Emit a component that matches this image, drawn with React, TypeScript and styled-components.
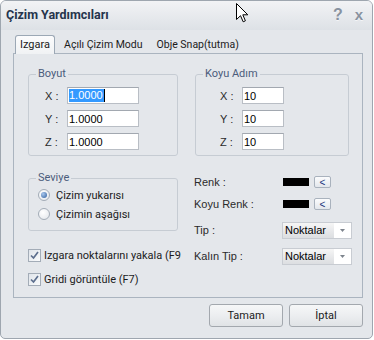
import styled, { createGlobalStyle } from 'styled-components';

const GlobalStyle = createGlobalStyle`
  html, body {
    margin: 0;
    padding: 0;
    background: #ffffff;
  }
  * {
    box-sizing: border-box;
  }
`;

const uiFont = `Roboto, "Liberation Sans", sans-serif`;
const classicFont = `"Liberation Sans", Arial, sans-serif`;

const App = () => {
  return (
    <>
      <GlobalStyle />
      <Window>
        <TitleBar>
          <Title>Çizim Yardımcıları</Title>
          <TitleButton>?</TitleButton>
          <TitleButton $close>x</TitleButton>
        </TitleBar>
        <Content>
          <TabStrip>
            <Tab $active>Izgara</Tab>
            <Tab>Açılı Çizim Modu</Tab>
            <Tab>Obje Snap(tutma)</Tab>
          </TabStrip>
          <Panel>
            <TopRow>
              <Group $width={150}>
                <Legend>Boyut</Legend>
                <GroupBody $padLeft={16}>
                  <FieldRow>
                    <AxisLabel>X :</AxisLabel>
                    <TextBox $width={72}>
                      <Selected>1.0000</Selected>
                      <Caret />
                    </TextBox>
                  </FieldRow>
                  <FieldRow>
                    <AxisLabel>Y :</AxisLabel>
                    <TextBox $width={72}>1.0000</TextBox>
                  </FieldRow>
                  <FieldRow>
                    <AxisLabel>Z :</AxisLabel>
                    <TextBox $width={72}>1.0000</TextBox>
                  </FieldRow>
                </GroupBody>
              </Group>
              <Group $width={154}>
                <Legend>Koyu Adım</Legend>
                <GroupBody $padLeft={24}>
                  <FieldRow>
                    <AxisLabel>X :</AxisLabel>
                    <TextBox $width={42}>10</TextBox>
                  </FieldRow>
                  <FieldRow>
                    <AxisLabel>Y :</AxisLabel>
                    <TextBox $width={42}>10</TextBox>
                  </FieldRow>
                  <FieldRow>
                    <AxisLabel>Z :</AxisLabel>
                    <TextBox $width={42}>10</TextBox>
                  </FieldRow>
                </GroupBody>
              </Group>
            </TopRow>

            <BottomRow>
              <LeftColumn>
                <Group $width={150}>
                  <Legend>Seviye</Legend>
                  <RadioList>
                    <OptionRow>
                      <Radio $checked />
                      <OptionText>Çizim yukarısı</OptionText>
                    </OptionRow>
                    <OptionRow>
                      <Radio />
                      <OptionText>Çizimin aşağısı</OptionText>
                    </OptionRow>
                  </RadioList>
                </Group>
                <CheckList>
                  <OptionRow>
                    <CheckBox>
                      <svg width="9" height="9" viewBox="0 0 9 9">
                        <path d="M1 4.5 L3.5 7 L8 1" fill="none" stroke="#5d6f8e" strokeWidth="1.7" />
                      </svg>
                    </CheckBox>
                    <OptionText>Izgara noktalarını yakala (F9</OptionText>
                  </OptionRow>
                  <OptionRow>
                    <CheckBox>
                      <svg width="9" height="9" viewBox="0 0 9 9">
                        <path d="M1 4.5 L3.5 7 L8 1" fill="none" stroke="#5d6f8e" strokeWidth="1.7" />
                      </svg>
                    </CheckBox>
                    <OptionText>Gridi görüntüle (F7)</OptionText>
                  </OptionRow>
                </CheckList>
              </LeftColumn>

              <RightColumn>
                <PropRow $top={1}>
                  <PropLabel>Renk :</PropLabel>
                  <Swatch />
                  <PickButton>&lt;</PickButton>
                </PropRow>
                <PropRow $top={4}>
                  <PropLabel>Koyu Renk :</PropLabel>
                  <Swatch />
                  <PickButton>&lt;</PickButton>
                </PropRow>
                <PropRow $top={8}>
                  <PropLabel>Tip :</PropLabel>
                  <Combo>
                    <ComboText>Noktalar</ComboText>
                    <ComboArrow>
                      <svg width="5" height="3" viewBox="0 0 5 3">
                        <path d="M0 0 H5 L2.5 3 Z" fill="#7d848d" />
                      </svg>
                    </ComboArrow>
                  </Combo>
                </PropRow>
                <PropRow $top={8}>
                  <PropLabel>Kalın Tip :</PropLabel>
                  <Combo>
                    <ComboText>Noktalar</ComboText>
                    <ComboArrow>
                      <svg width="5" height="3" viewBox="0 0 5 3">
                        <path d="M0 0 H5 L2.5 3 Z" fill="#7d848d" />
                      </svg>
                    </ComboArrow>
                  </Combo>
                </PropRow>
              </RightColumn>
            </BottomRow>
          </Panel>

          <Footer>
            <DialogButton>Tamam</DialogButton>
            <DialogButton>İptal</DialogButton>
          </Footer>
        </Content>

        <Cursor width="13" height="20" viewBox="0 0 13 20">
          <path
            d="M0.5 0.5 L0.5 16.5 L4.5 12.7 L7.2 18.8 L9.4 17.8 L6.8 11.8 L11.8 11.8 Z"
            fill="#ffffff"
            stroke="#000000"
            strokeWidth="1"
            strokeLinejoin="miter"
          />
        </Cursor>
      </Window>
    </>
  );
};

const Window = styled.div`
  position: relative;
  width: 373px;
  height: 339px;
  border: 1px solid #9ea6af;
  border-radius: 6px 6px 5px 5px;
  background: #e4e7eb;
  overflow: hidden;
  display: flex;
  flex-direction: column;
`;

const TitleBar = styled.div`
  display: flex;
  align-items: center;
  height: 29px;
  padding: 0 9px 2px 5px;
  background: linear-gradient(#f2f3f5, #dde1e6);
`;

const Title = styled.div`
  flex: 1;
  font-family: ${uiFont};
  font-size: 12.5px;
  font-weight: bold;
  color: #25344c;
`;

const TitleButton = styled.div<{ $close?: boolean }>`
  font-family: ${classicFont};
  font-weight: bold;
  font-size: ${(p) => (p.$close ? '15px' : '16px')};
  color: #8892a0;
  margin-left: ${(p) => (p.$close ? '12px' : '0')};
  line-height: 16px;
  text-shadow: 0 1px 0 #f4f5f7;
`;

const Content = styled.div`
  display: flex;
  flex-direction: column;
  padding: 5px 0 0 12px;
`;

const TabStrip = styled.div`
  display: flex;
  align-items: flex-end;
  height: 18px;
  padding-left: 2px;
`;

const Tab = styled.div<{ $active?: boolean }>`
  display: flex;
  align-items: center;
  font-family: ${uiFont};
  font-size: 10.5px;
  color: #1b1b1b;
  white-space: nowrap;
  ${(p) =>
    p.$active
      ? `
    position: relative;
    z-index: 1;
    height: 19px;
    margin-bottom: -1px;
    padding: 0 4px 1px;
    border: 1px solid #9ca8b5;
    border-bottom: none;
    border-radius: 3px 3px 0 0;
    background: linear-gradient(#fcfcfd, #f0f2f4);
    font-size: 11px;
  `
      : `
    height: 17px;
    margin-left: 4px;
    padding: 0 5px;
  `}
`;

const Panel = styled.div`
  width: 350px;
  height: 245px;
  border: 1px solid #aab4bf;
  background: #e4e7eb;
  padding: 14px 0 0 14px;
`;

const TopRow = styled.div`
  display: flex;
  gap: 17px;
`;

const Group = styled.fieldset<{ $width: number }>`
  width: ${(p) => p.$width}px;
  margin: 0;
  padding: 0;
  border: 1px solid #c6ccd3;
  border-radius: 3px;
`;

const Legend = styled.legend`
  margin-left: 7px;
  padding: 0 2px;
  font-family: ${uiFont};
  font-size: 11px;
  line-height: 12px;
  color: #4b5c7b;
`;

const GroupBody = styled.div<{ $padLeft: number }>`
  display: flex;
  flex-direction: column;
  gap: 6px;
  padding: 7px 0 5px ${(p) => p.$padLeft}px;
`;

const FieldRow = styled.div`
  display: flex;
  align-items: center;
  height: 17px;
`;

const AxisLabel = styled.span`
  width: 22px;
  font-family: ${classicFont};
  font-size: 11px;
  color: #2a2a2a;
`;

const TextBox = styled.div<{ $width: number }>`
  display: flex;
  align-items: center;
  width: ${(p) => p.$width}px;
  height: 17px;
  padding-left: 1px;
  border: 1px solid #b9bec5;
  border-top-color: #a2a8b0;
  background: #ffffff;
  font-family: ${classicFont};
  font-size: 11px;
  color: #000000;
`;

const Selected = styled.span`
  background: #3399ff;
  color: #ffffff;
  line-height: 13px;
  padding-right: 1px;
`;

const Caret = styled.span`
  width: 1px;
  height: 13px;
  background: #000000;
`;

const BottomRow = styled.div`
  display: flex;
  margin-top: 16px;
`;

const LeftColumn = styled.div`
  width: 154px;
  display: flex;
  flex-direction: column;
`;

const RadioList = styled.div`
  display: flex;
  flex-direction: column;
  gap: 3px;
  padding: 3px 0 8px 9px;
`;

const OptionRow = styled.div`
  display: flex;
  align-items: center;
  height: 16px;
  white-space: nowrap;
`;

const OptionText = styled.span`
  font-family: ${uiFont};
  font-size: 11px;
  color: #1b1b1b;
`;

const Radio = styled.span<{ $checked?: boolean }>`
  position: relative;
  width: 12px;
  height: 12px;
  margin-right: 6px;
  border-radius: 50%;
  border: 1px solid #a3acb7;
  background: radial-gradient(circle at 40% 35%, #ffffff, #e1e5ea);
  flex-shrink: 0;
  ${(p) =>
    p.$checked &&
    `
    &::after {
      content: '';
      position: absolute;
      left: 2px;
      top: 2px;
      width: 6px;
      height: 6px;
      border-radius: 50%;
      background: radial-gradient(circle at 35% 35%, #a9c8ee, #2f5d9c);
    }
  `}
`;

const CheckList = styled.div`
  display: flex;
  flex-direction: column;
  gap: 8px;
  margin-top: 16px;
`;

const CheckBox = styled.span`
  display: flex;
  align-items: center;
  justify-content: center;
  width: 13px;
  height: 13px;
  margin-right: 3px;
  border: 1px solid #a3acb7;
  background: linear-gradient(135deg, #dfe4ea, #fafbfc);
  flex-shrink: 0;
`;

const RightColumn = styled.div`
  display: flex;
  flex-direction: column;
  margin-left: 12px;
`;

const PropRow = styled.div<{ $top: number }>`
  display: flex;
  align-items: center;
  height: 18px;
  margin-top: ${(p) => p.$top}px;
`;

const PropLabel = styled.span`
  width: 88px;
  font-family: ${classicFont};
  font-size: 11px;
  color: #2a2a2a;
`;

const Swatch = styled.span`
  width: 26px;
  height: 8px;
  margin-left: 1px;
  background: #000000;
`;

const PickButton = styled.span`
  display: flex;
  align-items: center;
  justify-content: center;
  width: 17px;
  height: 12px;
  margin-left: 5px;
  border: 1px solid #a9b2bd;
  border-radius: 2px;
  background: linear-gradient(#fbfcfd, #e3e7ec);
  font-family: ${classicFont};
  font-size: 10px;
  color: #20307a;
`;

const Combo = styled.div`
  display: flex;
  width: 70px;
  height: 17px;
  border: 1px solid #c8ccd2;
  background: #ffffff;
`;

const ComboText = styled.span`
  flex: 1;
  display: flex;
  align-items: center;
  padding-left: 2px;
  background: linear-gradient(#f6f6f6, #e7e8ea 55%, #dcdee1);
  font-family: ${classicFont};
  font-size: 11px;
  color: #000000;
`;

const ComboArrow = styled.span`
  display: flex;
  align-items: center;
  justify-content: center;
  width: 17px;
  background: #ffffff;
`;

const Footer = styled.div`
  display: flex;
  justify-content: flex-end;
  gap: 6px;
  width: 350px;
  margin-top: 6px;
`;

const DialogButton = styled.button`
  width: 74px;
  height: 23px;
  padding: 0;
  border: 1px solid #a3a8ae;
  border-radius: 3px;
  background: linear-gradient(#f6f7f8, #eceef0 50%, #e0e3e6);
  font-family: ${uiFont};
  font-size: 11px;
  color: #1b1b1b;
`;

const Cursor = styled.svg`
  position: absolute;
  left: 235px;
  top: 2px;
`;

export default App;
